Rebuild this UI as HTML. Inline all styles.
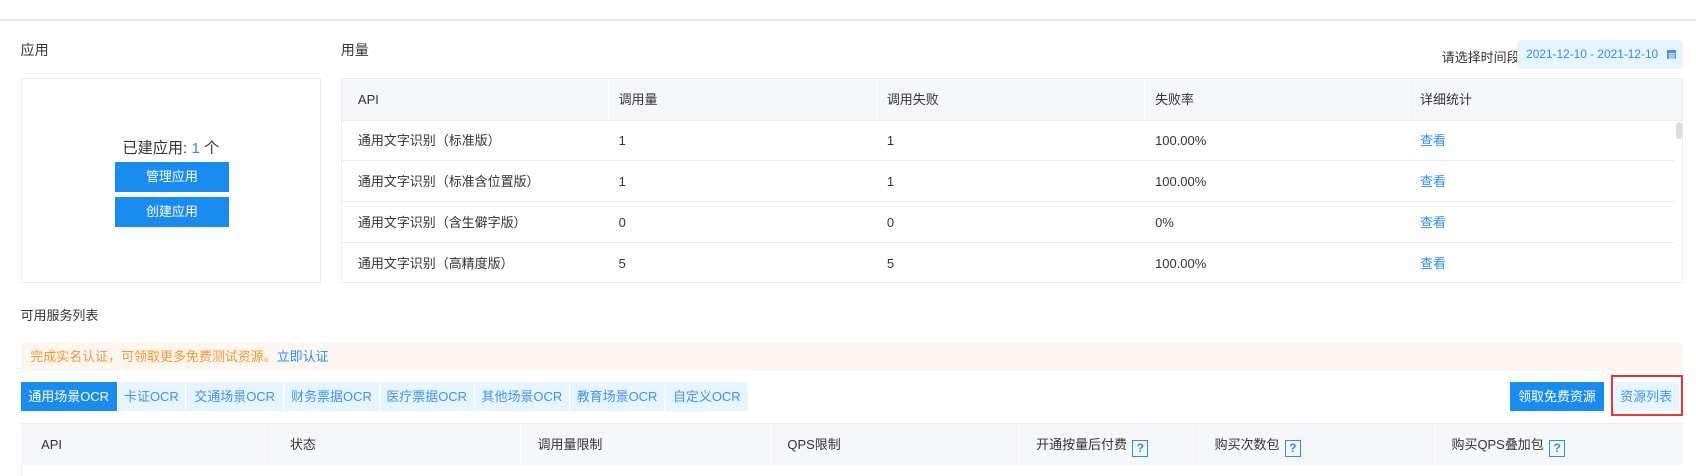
<!DOCTYPE html>
<html><head><meta charset="utf-8"><style>
html{zoom:1.0816}
body{margin:0;width:1568px;height:434px;overflow:hidden;background:#fff;font-family:"Liberation Sans","Noto Sans CJK SC",sans-serif;font-size:12px;color:#333;position:relative}
.a{position:absolute}
.t{font-size:13px;color:#333}
.box{border:1px solid #eaeaea;box-sizing:border-box}
.row{position:absolute;left:0;right:7px;height:38px;border-bottom:1px solid #ebebf3;box-sizing:border-box}
.c{position:absolute;top:0;line-height:38px;white-space:nowrap}
.blue{color:#2a8ef0}
.btn{position:absolute;background:#1a8cef;color:#fff;text-align:center;font-size:12px}
.tab{position:absolute;top:353px;height:27px;line-height:27px;text-align:center;background:#e8f4fd;color:#3d94e8;font-size:12px;white-space:nowrap}
.q{display:inline-block;width:13px;height:14px;border:1px solid #2a8ef0;color:#2a8ef0;font-size:11px;line-height:14px;text-align:center;margin-left:5px;vertical-align:-3px;font-weight:bold}
</style></head><body>
<div class="a" style="left:0;top:18px;width:1568px;height:1px;background:#e8e8e8"></div>
<div class="a t" style="left:19px;top:37px">应用</div>
<div class="a t" style="left:315px;top:37px">用量</div>
<div class="a" style="left:1333px;top:43px;font-size:12px;color:#333">请选择时间段</div>
<div class="a" style="left:1403px;top:37px;width:153px;height:27px;background:#e8f4fd;border-radius:4px;line-height:27px;color:#2a8ef0;font-size:11px;padding-left:8px;box-sizing:border-box;white-space:nowrap">2021-12-10 - 2021-12-10
<svg width="9" height="9" style="position:absolute;right:6px;top:9px"><rect x="0" y="0" width="9" height="9" fill="#4a8ef0"/><rect x="1.5" y="3" width="6" height="1" fill="#fff"/><rect x="1.5" y="5" width="6" height="1" fill="#fff"/><rect x="1.5" y="7" width="6" height="1" fill="#fff"/></svg></div>

<div class="a box" style="left:19px;top:72px;width:278px;height:190px">
<div class="a" style="left:0;right:0;top:53px;text-align:center;font-size:14px;color:#333">已建应用: <span class="blue">1</span> 个</div>
<div class="btn" style="left:86px;top:77px;width:106px;height:28px;line-height:28px">管理应用</div>
<div class="btn" style="left:86px;top:109px;width:106px;height:28px;line-height:28px">创建应用</div>
</div>

<div class="a box" style="left:315px;top:72px;width:1241px;height:190px;overflow:hidden">
<div class="a" style="left:0;right:0;top:0;height:38px;background:#f5f6f9;border-bottom:1px solid #ebebf3">
<div class="c" style="left:15px">API</div><div class="c" style="left:256px">调用量</div><div class="c" style="left:504px">调用失败</div><div class="c" style="left:752px">失败率</div><div class="c" style="left:997px">详细统计</div>
<div class="a" style="left:246px;top:0;width:1px;height:38px;background:#fff"></div><div class="a" style="left:494px;top:0;width:1px;height:38px;background:#fff"></div><div class="a" style="left:742px;top:0;width:1px;height:38px;background:#fff"></div><div class="a" style="left:987px;top:0;width:1px;height:38px;background:#fff"></div>
</div>
<div class="row" style="top:38px"><div class="c" style="left:15px">通用文字识别（标准版）</div><div class="c" style="left:256px">1</div><div class="c" style="left:504px">1</div><div class="c" style="left:752px">100.00%</div><div class="c blue" style="left:997px">查看</div></div>
<div class="row" style="top:76px"><div class="c" style="left:15px">通用文字识别（标准含位置版）</div><div class="c" style="left:256px">1</div><div class="c" style="left:504px">1</div><div class="c" style="left:752px">100.00%</div><div class="c blue" style="left:997px">查看</div></div>
<div class="row" style="top:114px"><div class="c" style="left:15px">通用文字识别（含生僻字版）</div><div class="c" style="left:256px">0</div><div class="c" style="left:504px">0</div><div class="c" style="left:752px">0%</div><div class="c blue" style="left:997px">查看</div></div>
<div class="row" style="top:152px"><div class="c" style="left:15px">通用文字识别（高精度版）</div><div class="c" style="left:256px">5</div><div class="c" style="left:504px">5</div><div class="c" style="left:752px">100.00%</div><div class="c blue" style="left:997px">查看</div></div>
<div class="a" style="left:1234px;top:40px;width:5px;height:16px;background:#ddd;border-radius:3px"></div>
</div>

<div class="a t" style="left:19px;top:282px;font-size:12px">可用服务列表</div>
<div class="a" style="left:19px;top:316px;width:1537px;height:27px;background:#fbf6ef;border-radius:4px;line-height:27px;color:#f39530;padding-left:9px;box-sizing:border-box;font-size:12px">完成实名认证，可领取更多免费测试资源。<span class="blue">立即认证</span></div>

<div class="tab" style="left:19px;width:89px;background:#1a8cef;color:#fff">通用场景OCR</div>
<div class="tab" style="left:109px;width:62px">卡证OCR</div>
<div class="tab" style="left:172px;width:90px">交通场景OCR</div>
<div class="tab" style="left:263px;width:87px">财务票据OCR</div>
<div class="tab" style="left:351px;width:87px">医疗票据OCR</div>
<div class="tab" style="left:439px;width:87px">其他场景OCR</div>
<div class="tab" style="left:527px;width:87px">教育场景OCR</div>
<div class="tab" style="left:615px;width:77px">自定义OCR</div>

<div class="btn" style="left:1396px;top:353px;width:87px;height:27px;line-height:27px">领取免费资源</div>
<div class="a" style="left:1489px;top:347px;width:67px;height:38px;border:2px solid #ee3333;box-sizing:border-box"></div>
<div class="tab" style="left:1492px;width:60px;top:353px">资源列表</div>

<div class="a" style="left:19px;top:391px;width:1537px;height:39px;background:#f5f6f9;border-top:1px solid #ebebf3;box-sizing:border-box">
<div class="c" style="left:19px;line-height:38px">API</div>
<div class="c" style="left:249px;line-height:38px">状态</div>
<div class="c" style="left:478px;line-height:38px">调用量限制</div>
<div class="c" style="left:709px;line-height:38px">QPS限制</div>
<div class="c" style="left:939px;line-height:38px">开通按量后付费<span class="q">?</span></div>
<div class="c" style="left:1104px;line-height:38px">购买次数包<span class="q">?</span></div>
<div class="c" style="left:1323px;line-height:38px">购买QPS叠加包<span class="q">?</span></div>
<div class="a" style="left:231px;top:0;width:1px;height:39px;background:#fff"></div>
<div class="a" style="left:462px;top:0;width:1px;height:39px;background:#fff"></div>
<div class="a" style="left:693px;top:0;width:1px;height:39px;background:#fff"></div>
<div class="a" style="left:923px;top:0;width:1px;height:39px;background:#fff"></div>
<div class="a" style="left:1089px;top:0;width:1px;height:39px;background:#fff"></div>
<div class="a" style="left:1308px;top:0;width:1px;height:39px;background:#fff"></div>
</div>
<div class="a" style="left:19px;top:430px;width:1px;height:10px;background:#eaeaea"></div>
</body></html>
